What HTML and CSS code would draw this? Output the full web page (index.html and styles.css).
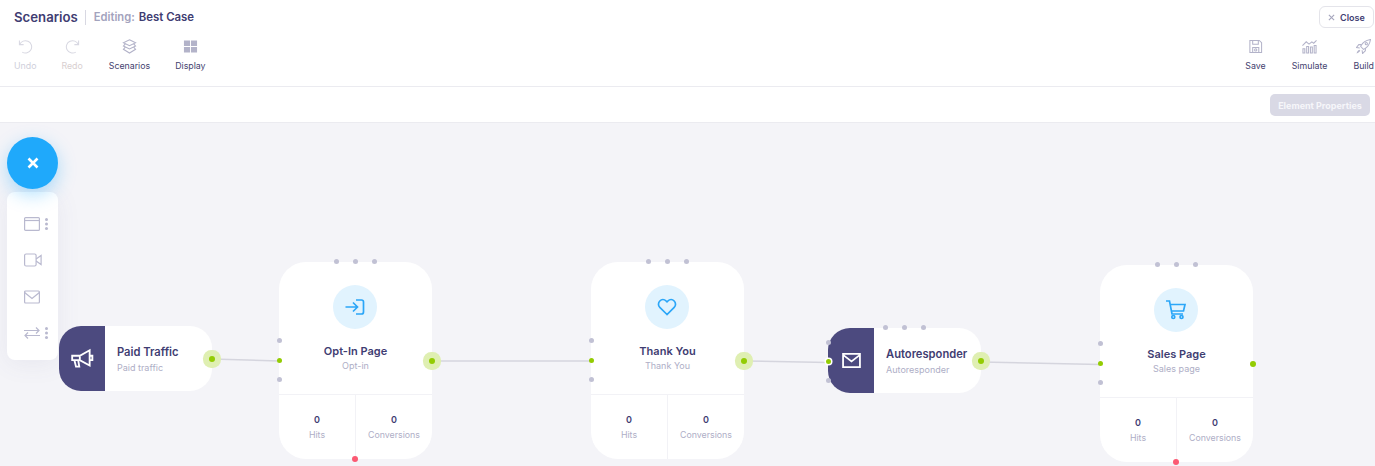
FILE: index.html
```html
<!DOCTYPE html>
<html lang="en">
<head>
    <meta charset="UTF-8">
    <title>Scenarios</title>
    <link rel="stylesheet" href="styles.css">
</head>
<body>
    <header class="topbar">
        <div class="title-row">
            <div class="title-left">
                <h1>Scenarios</h1>
                <span class="title-sep"></span>
                <span class="editing">Editing:</span>
                <span class="scenario-name">Best Case</span>
            </div>
            <button class="close-btn">
                <svg class="close-x" viewBox="0 0 8 8"><path d="M1 1l6 6M7 1L1 7"/></svg>
                Close
            </button>
        </div>
        <div class="tools">
            <div class="tool-group">
                <div class="tool tool-undo disabled">
                    <svg viewBox="0 0 16 16"><path d="M1.500 1.500v4.500H6M1.800 6A6.600 6.600 0 1 1 4.500 14"/></svg>
                    <span>Undo</span>
                </div>
                <div class="tool tool-redo disabled">
                    <svg viewBox="0 0 16 16"><path d="M14.500 1.500v4.500H10M14.200 6A6.600 6.600 0 1 0 11.500 14"/></svg>
                    <span>Redo</span>
                </div>
                <div class="tool tool-scenarios">
                    <svg viewBox="0 0 16 16"><path d="M8 .8l6.500 3.200L8 7.200 1.500 4zM3.300 5.500L1.500 7.500 8 10.700l6.500-3.200-1.800-2M3.300 9L1.500 11 8 15l6.500-4-1.800-2"/></svg>
                    <span>Scenarios</span>
                </div>
                <div class="tool tool-display">
                    <svg viewBox="0 0 16 16"><path class="solid" d="M1 1.500h6.500v6H1zM8.500 1.500H15v6H8.500zM1 8.500h6.500v6H1zM8.500 8.500H15v6H8.500z"/></svg>
                    <span>Display</span>
                </div>
            </div>
            <div class="tool-group">
                <div class="tool tool-save">
                    <svg viewBox="0 0 16 16"><path d="M2 1.500h10l2.500 2.500v10.500H2zM5 1.500v4h6v-4M5 14.500V9h6.500v5.500"/><circle cx="8.200" cy="11.700" r="1.200"/></svg>
                    <span>Save</span>
                </div>
                <div class="tool tool-simulate">
                    <svg viewBox="0 0 16 16"><path d="M.5 7l4-4 3 2.500L10.500 3l2 1.500 3-3M1 10.500h2v4.500H1zM5 8h2v7H5zM9 8.500h2V15H9zM13 7h2v8h-2z"/></svg>
                    <span>Simulate</span>
                </div>
                <div class="tool tool-build">
                    <svg viewBox="0 0 16 16"><path d="M5.500 7c1.500-3 4.500-5.500 10-6.500-1 5.500-3.500 8.500-6.500 10l-1 .5-3-3zM5.500 6H3L.5 9l3.500.5M10 10v2.500L7 15.500 6.500 12"/><path class="solid" d="M3.500 11.500c-1 .5-2.500 2-3 4 2-.5 3.500-2 4-3z"/><circle cx="11" cy="5" r="1.200"/></svg>
                    <span>Build</span>
                </div>
            </div>
        </div>
    </header>

    <div class="propbar">
        <button class="props-btn">Element Properties</button>
    </div>

    <main class="canvas">
        <svg class="wires" viewBox="0 0 1375 343">
            <path d="M212 236L279 238M432 238H591M744 238L828 239.500M981 239L1100 241.500"/>
        </svg>

        <div class="fab">
            <svg viewBox="0 0 12 12"><path d="M1.500 1.500l9 9M10.500 1.500l-9 9"/></svg>
        </div>
        <div class="palette">
            <div class="pal-item">
                <svg viewBox="0 0 16 14"><rect x=".6" y=".6" width="14.800" height="12.800" rx="1"/><path d="M.6 3.500h14.800"/></svg>
                <span class="pal-dots"></span>
            </div>
            <div class="pal-item">
                <svg viewBox="0 0 18 14" class="pal-video"><rect x=".6" y="1" width="11.500" height="12" rx="1.500"/><path d="M12.100 6l5-3.500v9l-5-3.500"/></svg>
            </div>
            <div class="pal-item">
                <svg viewBox="0 0 16 14"><rect x=".6" y="1" width="14.800" height="12" rx="1"/><path d="M.6 2.500L8 8.500l7.400-6"/></svg>
            </div>
            <div class="pal-item">
                <svg viewBox="0 0 16 14"><path d="M0 4.500h15M12 1.500l3 3-3 3M16 9.500H1M4 6.500l-3 3 3 3"/></svg>
                <span class="pal-dots"></span>
            </div>
        </div>

        <div class="node node-small node-paid">
            <div class="node-side">
                <svg viewBox="0 0 22 22"><path d="M2 8h7l9-5v14l-9-5H2zM18 8h2.500v4H18M4 12l1.500 6h3L7.500 12M9 8v4"/></svg>
            </div>
            <div class="node-text">
                <div class="node-name">Paid Traffic</div>
                <div class="node-sub">Paid traffic</div>
            </div>
            <span class="port out halo"></span>
        </div>

        <div class="node node-page node-optin">
            <span class="dot top d1"></span><span class="dot top d2"></span><span class="dot top d3"></span>
            <span class="dot left l1"></span><span class="port in"></span><span class="dot left l3"></span>
            <div class="node-body">
                <div class="node-icon">
                    <svg viewBox="0 0 20 20"><path d="M.5 10h12M8 5.500l4.500 4.500L8 14.500M11 3h5.500a2 2 0 0 1 2 2v10a2 2 0 0 1-2 2H11"/></svg>
                </div>
                <div class="node-name">Opt-In Page</div>
                <div class="node-sub">Opt-in</div>
            </div>
            <div class="node-stats">
                <div class="stat"><b>0</b><span>Hits</span></div>
                <div class="stat"><b>0</b><span>Conversions</span></div>
            </div>
            <span class="port out halo"></span>
            <span class="port fail"></span>
        </div>

        <div class="node node-page node-thanks">
            <span class="dot top d1"></span><span class="dot top d2"></span><span class="dot top d3"></span>
            <span class="dot left l1"></span><span class="port in"></span><span class="dot left l3"></span>
            <div class="node-body">
                <div class="node-icon">
                    <svg viewBox="0 0 20 20"><path d="M10 17.500L2.800 10.300a4.400 4.400 0 0 1 0-6.300 4.500 4.500 0 0 1 6.300 0l.9.900.9-.9a4.500 4.500 0 0 1 6.300 0 4.400 4.400 0 0 1 0 6.300z"/></svg>
                </div>
                <div class="node-name">Thank You</div>
                <div class="node-sub">Thank You</div>
            </div>
            <div class="node-stats">
                <div class="stat"><b>0</b><span>Hits</span></div>
                <div class="stat"><b>0</b><span>Conversions</span></div>
            </div>
            <span class="port out halo"></span>
        </div>

        <div class="node node-small node-auto">
            <span class="dot top a1"></span><span class="dot top a2"></span><span class="dot top a3"></span>
            <div class="node-side">
                <svg viewBox="0 0 20 16"><path d="M1 1h18v14H1zM1 2l9 7 9-7"/></svg>
            </div>
            <span class="dot left l1"></span><span class="port in ringed"></span><span class="dot left l3"></span>
            <div class="node-text">
                <div class="node-name">Autoresponder</div>
                <div class="node-sub">Autoresponder</div>
            </div>
            <span class="port out halo"></span>
        </div>

        <div class="node node-page node-sales">
            <span class="dot top d1"></span><span class="dot top d2"></span><span class="dot top d3"></span>
            <span class="dot left l1"></span><span class="port in"></span><span class="dot left l3"></span>
            <div class="node-body">
                <div class="node-icon">
                    <svg viewBox="0 0 20 20"><path d="M0 1h3.500l2.500 13h11M4.200 4.500H19l-1.500 6.500H5.500"/><circle cx="7.300" cy="17" r="1.500"/><circle cx="15.500" cy="17" r="1.500"/></svg>
                </div>
                <div class="node-name">Sales Page</div>
                <div class="node-sub">Sales page</div>
            </div>
            <div class="node-stats">
                <div class="stat"><b>0</b><span>Hits</span></div>
                <div class="stat"><b>0</b><span>Conversions</span></div>
            </div>
            <span class="port out"></span>
            <span class="port fail"></span>
        </div>
    </main>
</body>
</html>
```

FILE: styles.css
```css
* {
    box-sizing: border-box;
}

html, body {
    height: 100%;
    margin: 0;
    overflow: hidden;
}

body {
    display: flex;
    flex-direction: column;
    font-family: Inter, "Liberation Sans", sans-serif;
    background-color: #f4f4f8;
    color: #3a3a6b;
}

/* Top bar */
.topbar {
    height: 87px;
    background-color: white;
    border-bottom: 1px solid #ebebf0;
    padding: 6px 1px 0 14px;
}

.title-row {
    display: flex;
    justify-content: space-between;
    align-items: center;
    height: 22px;
}

.title-left {
    display: flex;
    align-items: center;
}

h1 {
    margin: 0;
    font-size: 13.200px;
    font-weight: 600;
    color: #3f3d72;
}

.title-sep {
    width: 1px;
    height: 15px;
    margin: 0 8px 0 7px;
    background-color: #d8d8e2;
}

.editing {
    font-size: 11.200px;
    font-weight: 600;
    color: #a3a3bd;
    margin-right: 4px;
}

.scenario-name {
    font-size: 11.400px;
    font-weight: 600;
    color: #3f3d72;
}

.close-btn {
    display: flex;
    align-items: center;
    width: 55px;
    height: 22px;
    padding: 0 0 0 8px;
    border: 1px solid #e4e4ea;
    border-radius: 6px;
    background-color: white;
    font-family: inherit;
    font-size: 9px;
    font-weight: 600;
    color: #3f3d72;
}

.close-x {
    width: 7px;
    height: 7px;
    margin-right: 5px;
    fill: none;
    stroke: #a6a6bd;
    stroke-width: 1.300;
}

.tools {
    display: flex;
    justify-content: space-between;
    margin-top: 11px;
}

.tool-group {
    display: flex;
}

.tool {
    display: flex;
    flex-direction: column;
    align-items: center;
    font-size: 8.800px;
    color: #45436f;
}

.tool svg {
    width: 15px;
    height: 15px;
    margin-bottom: 6px;
    fill: none;
    stroke: #b3b3c9;
    stroke-width: 1.100;
}

.tool svg .solid {
    fill: #b3b3c9;
    stroke: none;
}

.tool-redo {
    margin-left: 25px;
}

.tool-scenarios {
    margin-left: 26px;
}

.tool-display {
    margin-left: 25px;
}

.tool-simulate,
.tool-build {
    margin-left: 26px;
}

.tool.disabled {
    color: #cfcfdb;
}

.tool.disabled svg {
    stroke: #d8d8e2;
}

.tool-redo.disabled {
    color: #d8cfd0;
}

/* Properties bar */
.propbar {
    height: 36px;
    display: flex;
    justify-content: flex-end;
    align-items: flex-start;
    padding: 7px 5px 0 0;
    background-color: white;
    border-bottom: 1px solid #ebebf0;
}

.props-btn {
    width: 100px;
    height: 22px;
    padding: 0;
    border: none;
    border-radius: 5px;
    background-color: #d9d9e5;
    color: #f6f6fa;
    font-family: inherit;
    font-size: 9px;
    font-weight: 700;
}

/* Canvas, node positions are the content here */
.canvas {
    position: relative;
    flex: 1;
}

.wires {
    position: absolute;
    top: 0;
    left: 0;
    width: 1375px;
    height: 343px;
}

.wires path {
    fill: none;
    stroke: #d5d5de;
    stroke-width: 1.500;
}

.fab {
    position: absolute;
    left: 7px;
    top: 14px;
    z-index: 3;
    width: 51px;
    height: 52px;
    display: flex;
    justify-content: center;
    align-items: center;
    border-radius: 50%;
    background-color: #1fa9fb;
    box-shadow: 0 6px 18px rgba(31, 169, 251, 0.35);
}

.fab svg {
    width: 12px;
    height: 12px;
    fill: none;
    stroke: white;
    stroke-width: 2.600;
}

.palette {
    position: absolute;
    left: 7px;
    top: 69px;
    z-index: 2;
    width: 51px;
    height: 168px;
    display: flex;
    flex-direction: column;
    padding-top: 23px;
    gap: 19.500px;
    border-radius: 8px;
    background-color: white;
    box-shadow: 0 4px 24px rgba(90, 90, 140, 0.08);
}

.pal-item {
    position: relative;
    height: 17px;
    padding-left: 17px;
    display: flex;
    align-items: center;
}

.pal-item svg {
    width: 16px;
    height: 14px;
    fill: none;
    stroke: #b9b9cf;
    stroke-width: 1.200;
    overflow: visible;
}

.pal-item .pal-video {
    width: 18px;
}

.pal-dots {
    position: absolute;
    left: 37.500px;
    top: 2.500px;
    width: 3px;
    height: 3px;
    border-radius: 50%;
    background-color: #b9b9cf;
    box-shadow: 0 4.500px 0 #b9b9cf, 0 9px 0 #b9b9cf;
}

/* Nodes */
.node {
    position: absolute;
    width: 153px;
    background-color: white;
}

.node-paid {
    left: 59px;
    top: 203px;
    z-index: 4;
}

.node-optin {
    left: 279px;
    top: 139px;
}

.node-thanks {
    left: 591px;
    top: 139px;
}

.node-auto {
    left: 828px;
    top: 205px;
}

.node-sales {
    left: 1100px;
    top: 142px;
}

.node-small {
    height: 65px;
    display: flex;
    border-radius: 22px;
}

.node-page {
    height: 197px;
    display: flex;
    flex-direction: column;
    border-radius: 27px;
}

.node-side {
    width: 46px;
    display: flex;
    justify-content: center;
    align-items: center;
    border-radius: 22px 0 0 22px;
    background-color: #4c4a7f;
}

.node-side svg {
    width: 24px;
    height: 24px;
    fill: none;
    stroke: white;
    stroke-width: 1.700;
}

.node-auto .node-side svg {
    width: 19px;
    height: 15px;
    stroke-width: 1.900;
}

.node-text {
    padding: 19px 0 0 12px;
}

.node-small .node-name {
    font-size: 11.200px;
}

.node-body {
    height: 132px;
    display: flex;
    flex-direction: column;
    align-items: center;
    padding-top: 23px;
}

.node-icon {
    width: 44px;
    height: 44px;
    display: flex;
    justify-content: center;
    align-items: center;
    margin: 0 0 15px -1px;
    border-radius: 50%;
    background-color: #e1f3fe;
}

.node-icon svg {
    width: 20px;
    height: 20px;
    fill: none;
    stroke: #2ba6f8;
    stroke-width: 1.700;
}

.node-name {
    font-size: 11px;
    line-height: 14px;
    font-weight: 600;
    color: #3f3d72;
}

.node-sub {
    margin-top: 2px;
    font-size: 9px;
    line-height: 13px;
    color: #aeaec6;
}

.node-body .node-sub {
    margin-top: 1px;
}

.node-stats {
    flex: 1;
    display: flex;
    border-top: 1px solid #f2f2f6;
}

.stat {
    flex: 1;
    display: flex;
    flex-direction: column;
    align-items: center;
    padding-top: 19px;
    font-size: 8.800px;
    color: #aeaec6;
}

.stat + .stat {
    border-left: 1px solid #f2f2f6;
}

.stat b {
    margin-bottom: 2.500px;
    line-height: 12px;
    font-size: 9px;
    font-weight: 600;
    color: #3f3d72;
}

.dot, .port {
    position: absolute;
    border-radius: 50%;
}

.dot {
    width: 5px;
    height: 5px;
    background-color: #c1c1d4;
}

.dot.top {
    top: -3px;
}

.d1 { left: 54.500px; }
.d2 { left: 73.500px; }
.d3 { left: 92.500px; }
.a1 { left: 55px; }
.a2 { left: 74px; }
.a3 { left: 93px; }

.dot.left {
    left: -2.500px;
}

.l1 { top: 76px; }
.l3 { top: 115px; }
.node-auto .l1 { top: 12px; }
.node-auto .l3 { top: 50px; }

.port {
    background-color: #93cc03;
}

.port.in {
    left: -2.500px;
    top: 96px;
    width: 5px;
    height: 5px;
}

.port.in.ringed {
    left: -2.500px;
    top: 30.500px;
    width: 5px;
    height: 5px;
    box-shadow: 0 0 0 1.500px white;
}

.port.out {
    right: -3px;
    top: 96px;
    width: 6px;
    height: 6px;
}

.port.out.halo {
    box-shadow: 0 0 0 6px #dfefb2;
}

.node-small .port.out {
    top: 30px;
}

.port.fail {
    left: 73px;
    bottom: -3px;
    width: 6px;
    height: 6px;
    background-color: #fb5a73;
}
```
